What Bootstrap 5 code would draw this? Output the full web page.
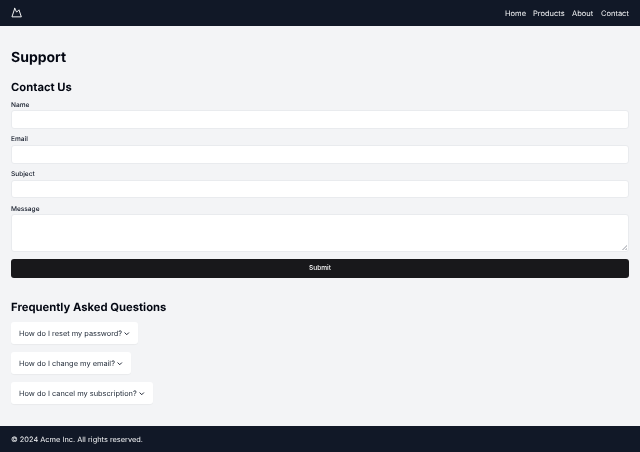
<!DOCTYPE html>
<html lang="en">
<head>
<meta charset="utf-8">
<title>Support</title>
<link rel="stylesheet" href="https://cdn.jsdelivr.net/npm/bootstrap@5.3.0/dist/css/bootstrap.min.css">
<style>
html,body{height:452px;overflow:hidden}
body{font-family:Inter,"Liberation Sans",sans-serif;background:#f3f4f6;color:#111827;display:flex;flex-direction:column;font-size:7.4px;text-rendering:geometricPrecision}
.txt-layer{will-change:transform}
.topbar{background:#111827;height:26px;padding:0 11.25px}
.topbar a{color:#f3f4f6;font-size:7.5px;text-decoration:none;line-height:1}
.nav-set{gap:7.5px;padding-top:1px}
.brand-mark{display:block}
.page-main{flex:1;padding:22.5px 11.25px 0}
.page-title{font-size:14px;font-weight:700;line-height:17px;margin:0 0 14px;color:#030712}
.sec-title{font-size:11.25px;font-weight:700;line-height:15px;margin:0 0 6px;color:#030712}
.fld-label{display:block;font-size:6.56px;font-weight:500;line-height:9.4px;margin:0 0 .3px;color:#111827}
.fld{display:block;width:100%;height:18.75px;padding:0 5.6px;border:1px solid #e9ebee;border-radius:3px;background:#fff;font-size:7.5px;margin-bottom:6.3px;outline:0}
textarea.fld{height:37.5px;resize:vertical;margin-bottom:7.5px}
textarea.fld::-webkit-resizer{background:linear-gradient(135deg,transparent 50%,#c9cbd0 50%,#c9cbd0 65%,transparent 65%,transparent 78%,#c9cbd0 78%) no-repeat right 1px bottom 1px/5px 5px}
.send-btn{height:18.4px;background:#18181b;color:#fafafa;border:0;border-radius:3px;font-size:6.56px;font-weight:500;line-height:1;padding:0}
.faq-head{margin-top:22px;margin-bottom:7px}
.faq-item{background:#fff;border-radius:3px;box-shadow:0 1px 1px rgba(0,0,0,.04);height:22.5px;padding:0 7.5px;font-size:7.4px;color:#1f2937;margin-bottom:7.5px;align-self:flex-start}
.chev{margin:1px 0 0 1.5px}
.page-foot{background:#111827;height:26px;padding:1px 11.25px 0;color:#f3f4f6;font-size:7.4px}
</style>
</head>
<body>
<nav class="topbar d-flex align-items-center justify-content-between">
<svg class="brand-mark" width="11.25" height="11.25" viewBox="0 0 24 24" fill="none" stroke="#fff" stroke-width="2" stroke-linejoin="round" stroke-linecap="round"><path d="m8 3 4 8 5-5 5 15H2L8 3z"/></svg>
<div class="d-flex nav-set"><a class="txt-layer" href="#">Home</a><a class="txt-layer" href="#">Products</a><a class="txt-layer" href="#">About</a><a class="txt-layer" href="#">Contact</a></div>
</nav>
<main class="page-main d-flex flex-column">
<h1 class="page-title txt-layer">Support</h1>
<h2 class="sec-title txt-layer">Contact Us</h2>
<form class="d-flex flex-column">
<label class="fld-label txt-layer" for="f1">Name</label><input class="fld" id="f1">
<label class="fld-label txt-layer" for="f2">Email</label><input class="fld" id="f2">
<label class="fld-label txt-layer" for="f3">Subject</label><input class="fld" id="f3">
<label class="fld-label txt-layer" for="f4">Message</label><textarea class="fld" id="f4"></textarea>
<button type="button" class="send-btn"><span class="d-inline-block txt-layer">Submit</span></button>
</form>
<h2 class="sec-title faq-head txt-layer">Frequently Asked Questions</h2>
<div class="faq-item d-flex align-items-center"><span class="txt-layer">How do I reset my password?</span><svg class="chev" width="7.5" height="7.5" viewBox="0 0 24 24" fill="none" stroke="#111827" stroke-width="3" stroke-linecap="round" stroke-linejoin="round"><path d="m6 9 6 6 6-6"/></svg></div>
<div class="faq-item d-flex align-items-center"><span class="txt-layer">How do I change my email?</span><svg class="chev" width="7.5" height="7.5" viewBox="0 0 24 24" fill="none" stroke="#111827" stroke-width="3" stroke-linecap="round" stroke-linejoin="round"><path d="m6 9 6 6 6-6"/></svg></div>
<div class="faq-item d-flex align-items-center"><span class="txt-layer">How do I cancel my subscription?</span><svg class="chev" width="7.5" height="7.5" viewBox="0 0 24 24" fill="none" stroke="#111827" stroke-width="3" stroke-linecap="round" stroke-linejoin="round"><path d="m6 9 6 6 6-6"/></svg></div>
</main>
<footer class="page-foot d-flex align-items-center"><span class="txt-layer">© 2024 Acme Inc. All rights reserved.</span></footer>
<script src="https://cdn.jsdelivr.net/npm/bootstrap@5.3.0/dist/js/bootstrap.bundle.min.js"></script>
</body>
</html>
